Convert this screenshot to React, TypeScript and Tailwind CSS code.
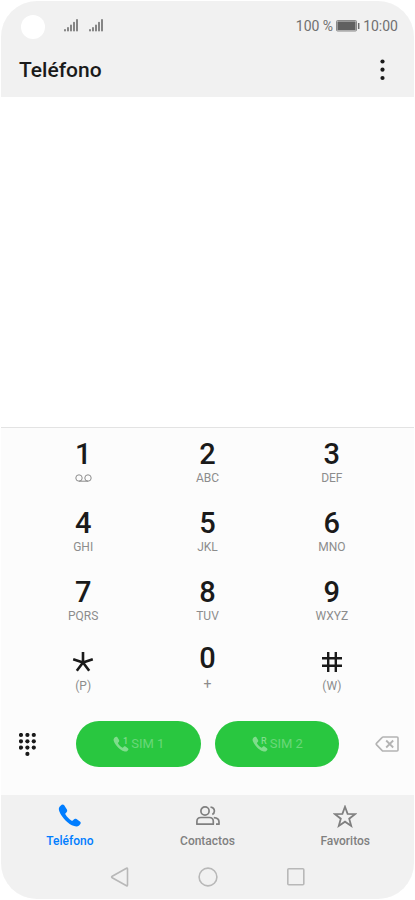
import type { ReactNode } from "react";

const PHONE_PATH =
  "M6.2 1.2C5.2.3 3.8.5 2.8 1.4L1.6 2.7C.6 3.9.7 5.6 1.3 7.3c1.200 3.300 3.500 6.500 6.200 9.100 2.600 2.600 5.500 4.700 8.700 5.700 1.800.6 3.700.5 4.900-.6l1.100-1.200c.8-1 .7-2.200-.3-2.900l-3.400-2.300c-.9-.6-2-.5-2.700.3l-1 1.100c-.4.400-1 .4-1.500.1-2.200-1.400-4.400-3.700-5.800-6-.3-.5-.3-1.100.2-1.500l.9-.9c.7-.7.8-1.700.3-2.600z";

function SignalIcon() {
  return (
    <svg width="14" height="14" viewBox="0 0 14 14" className="text-[#6b6b6b]" aria-hidden="true">
      <path
        d="M1 10.800v1M4 8.800v3M7 6.300v5.500M10 3.500v8.300M13 .8v11"
        stroke="currentColor"
        strokeWidth="1.6"
        strokeLinecap="round"
      />
    </svg>
  );
}

function BatteryIcon() {
  return (
    <svg width="24" height="12" viewBox="0 0 24 12" aria-hidden="true">
      <rect x="0.500" y="0.500" width="20" height="10.500" rx="1" fill="#d0d0d0" stroke="#8a8a8a" />
      <rect x="1.500" y="1.500" width="18" height="8.500" fill="#606060" />
      <path d="M22.700 3v6" stroke="#6b6b6b" strokeWidth="1.500" />
    </svg>
  );
}

function VoicemailIcon() {
  return (
    <svg width="17" height="9" viewBox="0 0 17 9" fill="none" stroke="#8c8c8c" aria-hidden="true">
      <circle cx="4" cy="4" r="3.200" />
      <circle cx="13" cy="4" r="3.200" />
      <path d="M4 7.200h9" />
    </svg>
  );
}

function StarKeyIcon() {
  return (
    <svg width="22" height="22" viewBox="0 0 22 22" stroke="#1a1a1a" strokeWidth="2.600" aria-hidden="true">
      <path d="M11 1v10.500M1.200 8.300l9.800 3.200M20.800 8.300l-9.800 3.200M4.800 19.800l6.200-8.300M17.200 19.800l-6.200-8.300" />
    </svg>
  );
}

function HashKeyIcon() {
  return (
    <svg width="22" height="22" viewBox="0 0 22 22" stroke="#1a1a1a" strokeWidth="2.400" aria-hidden="true">
      <path d="M7.200 1v20M14.800 1v20M1 7.200h20M1 14.800h20" />
    </svg>
  );
}

function KeypadIcon() {
  const dots = [
    [2, 2], [8.4, 2], [14.8, 2],
    [2, 8.3], [8.4, 8.3], [14.8, 8.3],
    [2, 14.6], [8.4, 14.6], [14.8, 14.6],
    [8.4, 20.900],
  ];
  return (
    <svg width="17" height="23" viewBox="0 0 17 23" fill="#1a1a1a" aria-hidden="true">
      {dots.map(([x, y]) => (
        <circle key={`${x}-${y}`} cx={x} cy={y} r="2.100" />
      ))}
    </svg>
  );
}

function BackspaceIcon() {
  return (
    <svg width="24" height="16" viewBox="0 0 24 16" fill="none" stroke="#b3b3b3" strokeWidth="1.600" strokeLinejoin="round" aria-hidden="true">
      <path d="M8.300 1H22q1 0 1 1v12q0 1-1 1H8.300q-.8 0-1.300-.6L1.400 8.600q-.5-.6 0-1.200L7 1.600Q7.500 1 8.300 1z" />
      <path d="M11.200 4.500l7 7M18.200 4.500l-7 7" strokeWidth="1.800" />
    </svg>
  );
}

function ContactsIcon() {
  return (
    <svg width="24" height="20" viewBox="0 0 24 20" fill="none" stroke="#808080" strokeWidth="1.700" strokeLinejoin="round" aria-hidden="true">
      <circle cx="9" cy="5" r="4.100" />
      <path d="M.9 18.200v-2.700q0-4 4-4h8.400q4 0 4 4v2.700z" />
      <path d="M14.500 1.100c2.500.3 3.900 1.900 3.900 4 0 1.500-.8 2.800-2.100 3.500M17.800 11.700c3.400.2 5.200 1.900 5.200 4.300v2.200h-3" />
    </svg>
  );
}

function FavoritesIcon() {
  return (
    <svg width="24" height="23" viewBox="0 0 24 23" fill="none" stroke="#808080" strokeWidth="1.800" aria-hidden="true">
      <path d="M12 1.800l2.600 7 7.400.3-5.800 4.600 2 7.200-6.200-4.200-6.200 4.200 2-7.200L2 9.100l7.400-.3z" />
    </svg>
  );
}

type Key = { name: string; face: ReactNode; sub: ReactNode };

const KEYS: Key[] = [
  { name: "1", face: "1", sub: <VoicemailIcon /> },
  { name: "2", face: "2", sub: "ABC" },
  { name: "3", face: "3", sub: "DEF" },
  { name: "4", face: "4", sub: "GHI" },
  { name: "5", face: "5", sub: "JKL" },
  { name: "6", face: "6", sub: "MNO" },
  { name: "7", face: "7", sub: "PQRS" },
  { name: "8", face: "8", sub: "TUV" },
  { name: "9", face: "9", sub: "WXYZ" },
  { name: "*", face: <StarKeyIcon />, sub: "(P)" },
  { name: "0", face: "0", sub: "+" },
  { name: "#", face: <HashKeyIcon />, sub: "(W)" },
];

function DialKey({ name, face, sub }: Key) {
  const isZero = name === "0";
  return (
    <button type="button" className={`flex flex-col items-center ${isZero ? "pt-1.5" : "pt-2.5"}`}>
      <span className="flex h-8 items-center text-[29px] leading-8 font-medium text-[#1a1a1a]">{face}</span>
      <span
        className={`flex h-4 items-center leading-4 text-[#8c8c8c] ${isZero ? "mt-0.5 text-sm" : "text-xs"}`}
      >
        {sub}
      </span>
    </button>
  );
}

function CallButton({ mark, label }: { mark: string; label: string }) {
  return (
    <button
      type="button"
      className="flex h-[46px] flex-1 items-center justify-center gap-0.5 rounded-full bg-[#29c740] text-[13px] text-[#69d779]"
    >
      <svg width="17" height="17" viewBox="0 0 17 17" fill="#7fdd8c" aria-hidden="true">
        <path d={PHONE_PATH} transform="translate(1 .3) scale(0.68)" />
        <text x={mark === "R" ? 10 : 11} y="8" fontSize="9" fontWeight="500" fontFamily="Roboto, sans-serif">
          {mark}
        </text>
      </svg>
      {label}
    </button>
  );
}

function Tab({ icon, label, active }: { icon: ReactNode; label: string; active?: boolean }) {
  return (
    <a
      href="#"
      className={`flex flex-1 flex-col items-center text-xs font-medium ${
        active ? "text-[#007dff]" : "text-[#808080]"
      }`}
    >
      <span className="flex h-6 items-center">{icon}</span>
      <span className="mt-[5px]">{label}</span>
    </a>
  );
}

export default function App() {
  return (
    <div className="flex min-h-screen flex-col bg-white p-px font-[Roboto,sans-serif]">
      <div className="flex flex-1 flex-col overflow-hidden rounded-[36px] bg-[#fcfcfc]">
        <header className="h-24 bg-[#f1f1f1]">
          <div className="flex h-[50px] items-center pr-4 pl-5 text-sm text-[#707070]">
            <span className="mt-0.5 size-6 rounded-full bg-white" />
            <div className="ml-[19px] flex gap-[11px]">
              <SignalIcon />
              <SignalIcon />
            </div>
            <div className="ml-auto flex items-center gap-[3px]">
              <span>100 %</span>
              <BatteryIcon />
              <span>10:00</span>
            </div>
          </div>
          <div className="flex h-10 items-center justify-between pr-5 pl-[18px]">
            <h1 className="text-[21px] font-medium text-[#1a1a1a]">Teléfono</h1>
            <button type="button" aria-label="Más opciones" className="flex w-6 justify-center">
              <svg width="5" height="24" viewBox="0 0 5 24" fill="#1a1a1a" aria-hidden="true">
                <circle cx="2.500" cy="2.500" r="2.100" />
                <circle cx="2.500" cy="10.700" r="2.100" />
                <circle cx="2.500" cy="19" r="2.100" />
              </svg>
            </button>
          </div>
        </header>

        <main className="flex-1 bg-white" />

        <section className="border-t border-[#e3e3e3]">
          <div className="grid grid-cols-3 grid-rows-[69px_69px_70px_69px] px-5">
            {KEYS.map((key) => (
              <DialKey key={key.name} {...key} />
            ))}
          </div>
          <div className="flex items-center pt-4 pr-[15px] pb-7 pl-[18px]">
            <button type="button" aria-label="Teclado">
              <KeypadIcon />
            </button>
            <div className="mr-9 ml-10 flex flex-1 gap-3.5">
              <CallButton mark="1" label="SIM 1" />
              <CallButton mark="R" label="SIM 2" />
            </div>
            <button type="button" aria-label="Borrar">
              <BackspaceIcon />
            </button>
          </div>
        </section>

        <footer className="h-[104px] bg-[#f1f1f1] pt-[9px]">
          <nav className="flex">
            <Tab
              active
              label="Teléfono"
              icon={
                <svg width="24" height="24" viewBox="0 0 24 24" fill="currentColor" aria-hidden="true">
                  <path d={PHONE_PATH} />
                </svg>
              }
            />
            <Tab label="Contactos" icon={<ContactsIcon />} />
            <Tab label="Favoritos" icon={<FavoritesIcon />} />
          </nav>
          <div className="mt-[18px] flex items-center justify-center gap-[68px]">
            <button type="button" aria-label="Atrás">
              <svg width="20" height="20" viewBox="0 0 20 20" fill="none" stroke="#b8b8b8" strokeWidth="1.600" strokeLinejoin="round" aria-hidden="true">
                <path d="M16.500 1.200q1-.5 1 .7v16.200q0 1.200-1 .7L2.200 10.700q-1.200-.7 0-1.400z" />
              </svg>
            </button>
            <button type="button" aria-label="Inicio">
              <svg width="20" height="20" viewBox="0 0 20 20" fill="none" stroke="#b8b8b8" strokeWidth="1.600" aria-hidden="true">
                <circle cx="10" cy="10" r="8.900" />
              </svg>
            </button>
            <button type="button" aria-label="Recientes">
              <svg width="20" height="20" viewBox="0 0 20 20" fill="none" stroke="#b8b8b8" strokeWidth="1.600" aria-hidden="true">
                <rect x="1.800" y="1.800" width="16" height="16" rx="1" />
              </svg>
            </button>
          </div>
        </footer>
      </div>
    </div>
  );
}
